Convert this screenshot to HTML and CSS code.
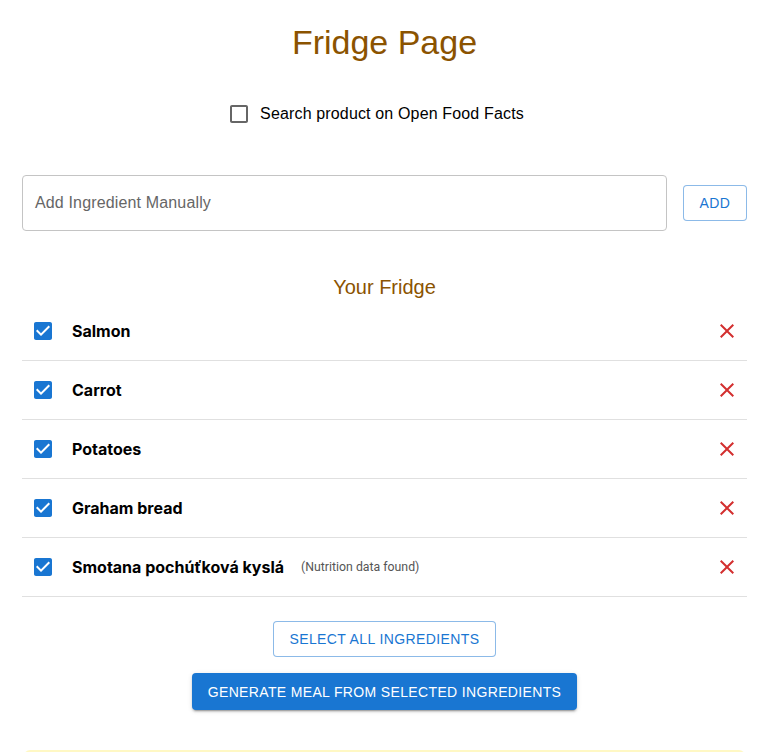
FILE: index.html
```html
<!DOCTYPE html>
<html>
<head>
<meta charset="utf-8">
<link rel="stylesheet" href="styles.css">
</head>
<body>
<div class="page">
  <h1 class="title">Fridge Page</h1>

  <label class="search-toggle">
    <svg class="cb-icon unchecked" viewBox="0 0 24 24"><path d="M19 5v14H5V5h14m0-2H5c-1.1 0-2 .9-2 2v14c0 1.1.9 2 2 2h14c1.1 0 2-.9 2-2V5c0-1.1-.9-2-2-2z"/></svg>
    <span>Search product on Open Food Facts</span>
  </label>

  <div class="add-row">
    <div class="input-box"><span class="placeholder">Add Ingredient Manually</span></div>
    <button class="btn-outline add-btn">ADD</button>
  </div>

  <h2 class="subtitle">Your Fridge</h2>

  <ul class="list">
    <li class="item">
      <svg class="cb-icon checked" viewBox="0 0 24 24"><path d="M19 3H5c-1.11 0-2 .9-2 2v14c0 1.1.89 2 2 2h14c1.11 0 2-.9 2-2V5c0-1.1-.89-2-2-2zm-9 14l-5-5 1.41-1.41L10 14.17l7.59-7.59L19 8l-9 9z"/></svg>
      <span class="name">Salmon</span>
      <svg class="del" viewBox="0 0 24 24"><path d="M19 6.41 17.59 5 12 10.59 6.41 5 5 6.41 10.59 12 5 17.59 6.41 19 12 13.41 17.59 19 19 17.59 13.41 12z"/></svg>
    </li>
    <li class="item">
      <svg class="cb-icon checked" viewBox="0 0 24 24"><path d="M19 3H5c-1.11 0-2 .9-2 2v14c0 1.1.89 2 2 2h14c1.11 0 2-.9 2-2V5c0-1.1-.89-2-2-2zm-9 14l-5-5 1.41-1.41L10 14.17l7.59-7.59L19 8l-9 9z"/></svg>
      <span class="name">Carrot</span>
      <svg class="del" viewBox="0 0 24 24"><path d="M19 6.41 17.59 5 12 10.59 6.41 5 5 6.41 10.59 12 5 17.59 6.41 19 12 13.41 17.59 19 19 17.59 13.41 12z"/></svg>
    </li>
    <li class="item">
      <svg class="cb-icon checked" viewBox="0 0 24 24"><path d="M19 3H5c-1.11 0-2 .9-2 2v14c0 1.1.89 2 2 2h14c1.11 0 2-.9 2-2V5c0-1.1-.89-2-2-2zm-9 14l-5-5 1.41-1.41L10 14.17l7.59-7.59L19 8l-9 9z"/></svg>
      <span class="name">Potatoes</span>
      <svg class="del" viewBox="0 0 24 24"><path d="M19 6.41 17.59 5 12 10.59 6.41 5 5 6.41 10.59 12 5 17.59 6.41 19 12 13.41 17.59 19 19 17.59 13.41 12z"/></svg>
    </li>
    <li class="item">
      <svg class="cb-icon checked" viewBox="0 0 24 24"><path d="M19 3H5c-1.11 0-2 .9-2 2v14c0 1.1.89 2 2 2h14c1.11 0 2-.9 2-2V5c0-1.1-.89-2-2-2zm-9 14l-5-5 1.41-1.41L10 14.17l7.59-7.59L19 8l-9 9z"/></svg>
      <span class="name">Graham bread</span>
      <svg class="del" viewBox="0 0 24 24"><path d="M19 6.41 17.59 5 12 10.59 6.41 5 5 6.41 10.59 12 5 17.59 6.41 19 12 13.41 17.59 19 19 17.59 13.41 12z"/></svg>
    </li>
    <li class="item">
      <svg class="cb-icon checked" viewBox="0 0 24 24"><path d="M19 3H5c-1.11 0-2 .9-2 2v14c0 1.1.89 2 2 2h14c1.11 0 2-.9 2-2V5c0-1.1-.89-2-2-2zm-9 14l-5-5 1.41-1.41L10 14.17l7.59-7.59L19 8l-9 9z"/></svg>
      <span class="name">Smotana pochúťková kyslá</span>
      <span class="note">(Nutrition data found)</span>
      <svg class="del" viewBox="0 0 24 24"><path d="M19 6.41 17.59 5 12 10.59 6.41 5 5 6.41 10.59 12 5 17.59 6.41 19 12 13.41 17.59 19 19 17.59 13.41 12z"/></svg>
    </li>
  </ul>

  <div class="actions">
    <button class="btn-outline select-btn">SELECT ALL INGREDIENTS</button>
    <button class="btn-filled">GENERATE MEAL FROM SELECTED INGREDIENTS</button>
  </div>

  <div class="notice"></div>
</div>
</body>
</html>
```

FILE: styles.css
```css
html, body {
  margin: 0;
  padding: 0;
  background: #fff;
  overflow: hidden;
}
body {
  font-family: "Liberation Sans", Arial, sans-serif;
  color: #000;
}
.page {
  padding: 0 16px 0 22px;
  display: flex;
  flex-direction: column;
}
.title {
  margin: 21px 0 0;
  text-align: center;
  font-weight: 400;
  font-size: 34px;
  line-height: 42px;
  color: #8b5300;
}
.search-toggle {
  margin-top: 39px;
  align-self: center;
  display: flex;
  align-items: center;
  gap: 9px;
  font-size: 16px;
  letter-spacing: 0.15px;
  color: #000;
  transform: translateX(-9px);
}
.cb-icon {
  width: 24px;
  height: 24px;
  flex: none;
}
.cb-icon.unchecked { fill: #666; }
.cb-icon.checked { fill: #1976d2; }
.add-row {
  margin-top: 49px;
  display: flex;
  align-items: center;
  gap: 16px;
}
.input-box {
  flex: 1;
  height: 54px;
  border: 1px solid #c4c4c4;
  border-radius: 4px;
  display: flex;
  align-items: center;
  padding-left: 12px;
}
.placeholder {
  font-size: 16px;
  color: #666;
  letter-spacing: 0.15px;
}
.btn-outline {
  font-family: "Liberation Sans", Arial, sans-serif;
  background: #fff;
  color: #1976d2;
  border: 1px solid rgba(25, 118, 210, 0.5);
  border-radius: 4px;
  font-size: 14px;
  letter-spacing: 0.4px;
  cursor: pointer;
}
.add-btn {
  width: 64px;
  height: 36px;
  padding: 0;
}
.subtitle {
  margin: 42px 0 0;
  text-align: center;
  font-weight: 400;
  font-size: 20px;
  line-height: 28px;
  color: #8b5300;
}
.list {
  list-style: none;
  margin: 1px 0 0;
  padding: 0;
}
.item {
  height: 58px;
  border-bottom: 1px solid #e0e0e0;
  display: flex;
  align-items: center;
  padding: 0 8px 0 9px;
}
.item .cb-icon { margin-right: 17px; }
.name {
  font-family: Inter, Roboto, sans-serif;
  font-weight: 700;
  font-size: 16px;
  color: #000;
}
.note {
  margin-left: 17px;
  font-family: Roboto, sans-serif;
  font-size: 12.3px;
  color: #555;
}
.del {
  margin-left: auto;
  width: 24px;
  height: 24px;
  fill: #d32f2f;
}
.actions {
  margin-top: 24px;
  display: flex;
  flex-direction: column;
  align-items: center;
  gap: 16px;
}
.select-btn {
  height: 36px;
  padding: 0 15px;
  font-size: 14px;
}
.btn-filled {
  font-family: "Liberation Sans", Arial, sans-serif;
  height: 37px;
  padding: 0 16px;
  background: #1976d2;
  color: #fff;
  border: none;
  border-radius: 4px;
  font-size: 14px;
  letter-spacing: 0.35px;
  box-shadow: 0 3px 1px -2px rgba(0,0,0,0.2), 0 2px 2px 0 rgba(0,0,0,0.14), 0 1px 5px 0 rgba(0,0,0,0.12);
}
.notice {
  margin: 40px 2px 0;
  height: 40px;
  background: #fff8c4;
  border-radius: 6px;
}
```
